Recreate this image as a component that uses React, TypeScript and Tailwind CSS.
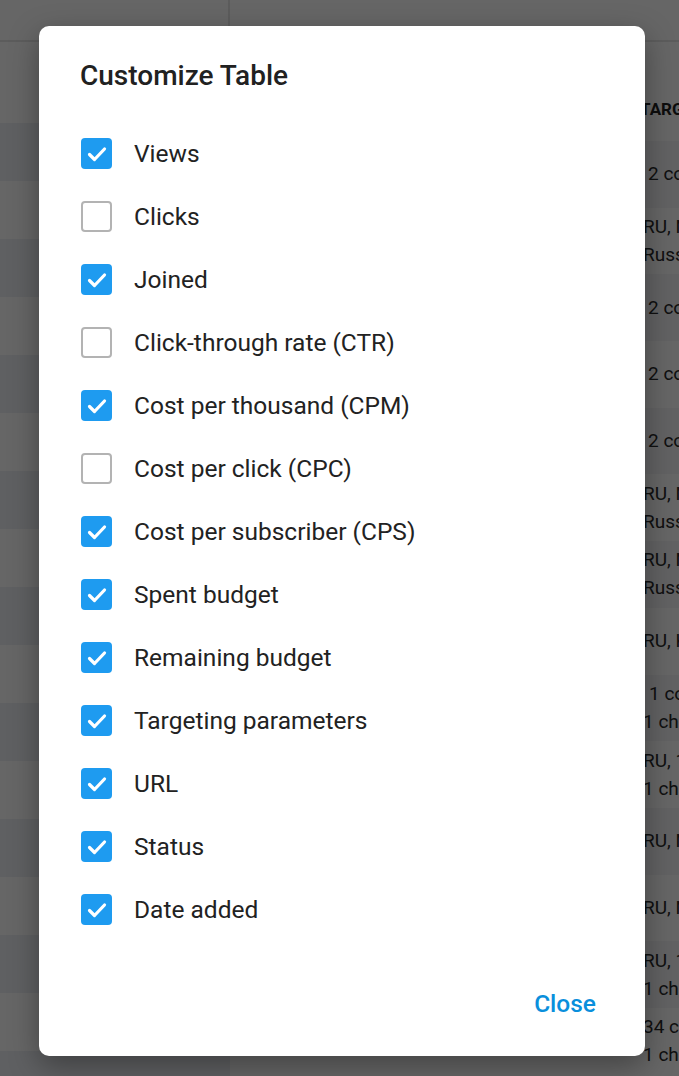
import React from "react";

const items: [string, boolean][] = [
  ["Views", true],
  ["Clicks", false],
  ["Joined", true],
  ["Click-through rate (CTR)", false],
  ["Cost per thousand (CPM)", true],
  ["Cost per click (CPC)", false],
  ["Cost per subscriber (CPS)", true],
  ["Spent budget", true],
  ["Remaining budget", true],
  ["Targeting parameters", true],
  ["URL", true],
  ["Status", true],
  ["Date added", true],
];

const rightRows: [string[], number][] = [
  [["2 countries"], 5],
  [["RU, NL, DE", "Russia, Netherlands"], 0],
  [["2 countries"], 5],
  [["2 countries"], 5],
  [["2 countries"], 5],
  [["RU, NL, DE", "Russia, Netherlands"], 0],
  [["RU, NL, DE", "Russia, Netherlands"], 0],
  [["RU, KZ"], 0],
  [["1 country", "1 channel"], 6],
  [["RU, 1 country", "1 channel"], 0],
  [["RU, NL"], 0],
  [["RU, NL"], 0],
  [["RU, 1 country", "1 channel"], 0],
  [["34 countries", "1 channel"], 0],
];

function Check({ on }: { on: boolean }) {
  if (on) {
    return (
      <div className="w-[31px] h-[31px] rounded-[4px] bg-[#1e9bf0] flex items-center justify-center shrink-0">
        <svg width="24" height="24" viewBox="0 0 24 24" fill="none">
          <path d="M4.5 12.5l5 5L19.5 7" stroke="white" strokeWidth="3.2" strokeLinecap="round" strokeLinejoin="round" />
        </svg>
      </div>
    );
  }
  return <div className="w-[31px] h-[31px] rounded-[4px] border-2 border-[#b3b3b3] bg-white shrink-0" />;
}

export default function App() {
  return (
    <div className="relative w-[679px] h-[1076px] overflow-hidden bg-white" style={{ fontFamily: "Roboto, 'Noto Sans', sans-serif" }}>
      {/* background page */}
      <div className="flex flex-col h-full">
        <div className="h-[42px] flex border-b-2 border-[#e6e6e6] shrink-0">
          <div className="w-[230px] border-r-2 border-[#e6e6e6]" />
          <div className="flex-1" />
        </div>
        <div className="flex flex-1">
          <div className="w-[230px] flex flex-col shrink-0">
            <div className="h-[81px] bg-white" />
            {Array.from({ length: 17 }).map((_, i) => (
              <div key={i} className={`h-[58px] shrink-0 ${i % 2 === 0 ? "bg-[#eef1f6]" : "bg-white"}`} />
            ))}
          </div>
          <div className="flex-1 flex flex-col">
            <div className="h-[99px] shrink-0 flex items-center pl-[410px] pt-[36px]">
              <span className="text-[17px] font-bold text-[#222]">TARGETING</span>
            </div>
            {rightRows.map(([r, off], i) => (
              <div
                key={i}
                className={`h-[66.7px] shrink-0 flex flex-col justify-center pl-[413px] text-[19px] leading-[28px] text-[#2a2a2a] whitespace-nowrap ${i % 2 === 0 ? "bg-[#f4f5f8]" : "bg-white"}`}
              >
                {r.map((t, j) => (
                  <span key={j} style={{ paddingLeft: j === 0 ? off : 0 }}>{t}</span>
                ))}
              </div>
            ))}
          </div>
        </div>
      </div>

      {/* overlay */}
      <div className="absolute inset-0 bg-black/60" />

      {/* dialog */}
      <div className="absolute left-[39px] top-[26px] w-[606px] h-[1030px] bg-white rounded-[10px] shadow-[0_10px_30px_rgba(0,0,0,0.35)] flex flex-col">
        <div className="pl-[41px] pt-[32px] text-[28px] leading-[36px] font-medium text-[#212121]">Customize Table</div>
        <div className="flex flex-col pl-[42px] pt-[44px] gap-[32px]">
          {items.map(([label, on]) => (
            <div key={label} className="flex items-center gap-[22px] h-[31px]">
              <Check on={on} />
              <span className="text-[24.5px] leading-[32px] text-[#222]">{label}</span>
            </div>
          ))}
        </div>
        <div className="flex-1" />
        <div className="flex justify-end pr-[49px] pb-[36px]">
          <span className="text-[24.5px] leading-[32px] font-medium text-[#0a8fdc]">Close</span>
        </div>
      </div>
    </div>
  );
}
